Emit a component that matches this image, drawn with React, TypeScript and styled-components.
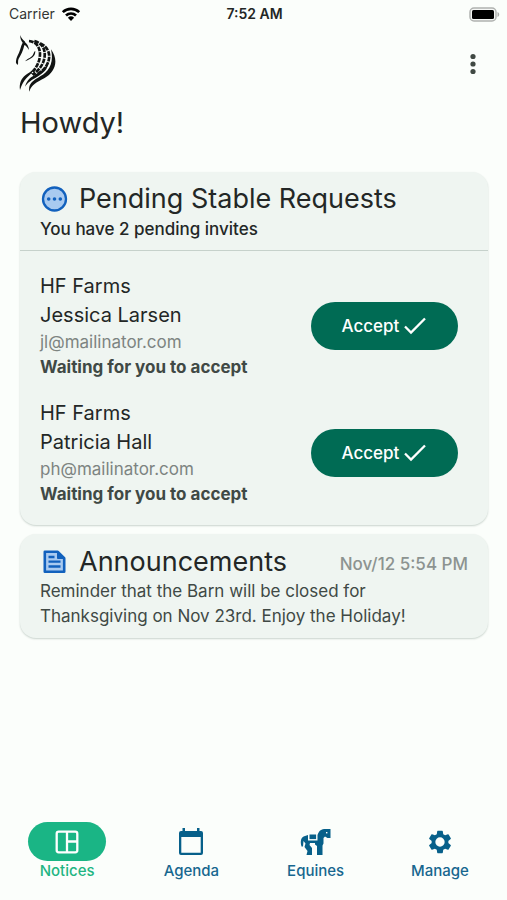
import React from "react";
import styled, { createGlobalStyle } from "styled-components";

const GlobalStyle = createGlobalStyle`
  * { box-sizing: border-box; }
  body {
    margin: 0;
    background: #fbfefb;
    color: #232726;
    font-family: Inter, "Liberation Sans", sans-serif;
  }
`;

const Screen = styled.div`
  min-height: 100vh;
  display: flex;
  flex-direction: column;
`;

const StatusBar = styled.div`
  display: grid;
  grid-template-columns: 1fr auto 1fr;
  align-items: center;
  height: 28px;
  padding: 0 7px 0 9px;
  font-size: 14px;
  line-height: 20px;
`;

const Carrier = styled.div`
  display: flex;
  align-items: center;
  gap: 6px;
  color: #333635;
`;

const Clock = styled.time`
  font-weight: 600;
`;

const Battery = styled.div`
  display: flex;
  justify-content: flex-end;
`;

const TopBar = styled.header`
  display: flex;
  justify-content: space-between;
  align-items: center;
  height: 72px;
  padding: 0 22px 0 15px;
`;

const MenuButton = styled.button`
  display: flex;
  padding: 0;
  border: 0;
  background: none;
  color: #404943;
  cursor: pointer;
`;

const Greeting = styled.h1`
  margin: 3px 0 29px;
  padding: 0 20px;
  font-size: 29px;
  line-height: 40px;
  font-weight: 400;
`;

const Main = styled.main`
  flex: 1;
`;

const Cards = styled.div`
  display: flex;
  flex-direction: column;
  gap: 9px;
  padding: 0 19px 0 20px;
`;

const Card = styled.section`
  border-radius: 16px;
  background: #eff5f1;
  box-shadow: 0 1px 2px rgba(0, 40, 25, 0.2);
`;

const CardHeader = styled.div`
  padding: 10px 20px 8px;
  border-bottom: 1px solid #c6d1cb;
`;

const CardTitle = styled.h2`
  display: flex;
  align-items: center;
  gap: 10px;
  margin: 0;
  font-size: 27px;
  line-height: 34px;
  font-weight: 400;
`;

const Summary = styled.p`
  margin: 0;
  font-size: 17px;
  line-height: 26px;
  font-weight: 500;
`;

const RequestList = styled.ul`
  display: flex;
  flex-direction: column;
  gap: 19px;
  margin: 0;
  padding: 21px 30px 18px 20px;
  list-style: none;
`;

const Request = styled.li`
  display: flex;
  align-items: center;
  justify-content: space-between;
`;

const Name = styled.div`
  font-size: 20px;
  line-height: 29px;
`;

const Detail = styled.div<{ $strong?: boolean }>`
  font-size: 17px;
  line-height: 25px;
  font-weight: ${(p) => (p.$strong ? 700 : 400)};
  color: ${(p) => (p.$strong ? "#404945" : "#7d8481")};
`;

const AcceptButton = styled.button`
  display: flex;
  align-items: center;
  justify-content: center;
  gap: 4px;
  flex: none;
  width: 147px;
  height: 48px;
  border: 0;
  border-radius: 24px;
  background: #006b54;
  color: #fff;
  font: inherit;
  font-size: 17px;
  font-weight: 500;
  cursor: pointer;
`;

const Announcement = styled.div`
  padding: 11px 20px 9px;
`;

const AnnouncementHead = styled.div`
  display: flex;
  align-items: center;
  justify-content: space-between;
`;

const Stamp = styled.time`
  padding-top: 4px;
  font-size: 17px;
  line-height: 24px;
  font-weight: 500;
  color: #8c9390;
`;

const Message = styled.p`
  max-width: 400px;
  margin: 0;
  font-size: 17px;
  line-height: 25px;
  color: #404945;
`;

const Nav = styled.nav`
  display: grid;
  grid-template-columns: repeat(4, 1fr);
  padding: 0 5px 19px;
`;

const NavLink = styled.a<{ $active?: boolean }>`
  display: flex;
  flex-direction: column;
  align-items: center;
  font-size: 15px;
  line-height: 20px;
  font-weight: 500;
  text-decoration: none;
  color: ${(p) => (p.$active ? "#1fb583" : "#17678f")};
`;

const NavPill = styled.span<{ $active?: boolean }>`
  display: flex;
  align-items: center;
  justify-content: center;
  width: 78px;
  height: 39px;
  border-radius: 20px;
  background: ${(p) => (p.$active ? "#1ab585" : "transparent")};
  color: ${(p) => (p.$active ? "#fff" : "#07608a")};
`;

const WifiIcon = () => (
  <svg width="20" height="16" viewBox="0 0 20 16" fill="none" stroke="#000" strokeWidth="2.7" aria-hidden="true">
    <path d="M1.8 6.1a11.8 11.8 0 0 1 16.4 0" />
    <path d="M5 9.5a7.2 7.2 0 0 1 10 0" />
    <path d="M10 15 6.9 11.8a4.5 4.5 0 0 1 6.2 0Z" fill="#000" stroke="none" />
  </svg>
);

const BatteryIcon = () => (
  <svg width="31" height="15" viewBox="0 0 31 15" aria-label="Battery full" role="img">
    <rect x="1" y="1" width="26" height="13" rx="4" fill="#f5f7f5" stroke="#b0b2b0" strokeWidth="1.5" />
    <rect x="3" y="3" width="22" height="9" rx="1.5" fill="#000" />
    <path d="M28.5 5c2.3.8 2.3 4.2 0 5Z" fill="#aaadaa" />
  </svg>
);

const HorseLogo = () => (
  <svg width="42" height="60" viewBox="30 12 126 180" role="img" aria-label="Horse logo">
    <g fill="#111413">
      <path d="M46 15c2 9 7 13 13 19 2 3 3 7 1 11l-2 1c-4 18-10 28-17 40-3 6-1 11-2 18-5-1-7-6-6-11 1-10 5-16 9-25 5-11 5-20 11-30-5-6-8-14-7-23Z" />
      <path d="M58 36c8 4 13 12 14 24-4-7-8-12-14-16Z" />
      <path d="M60 94c9-10 20-9 26-24 1-4 3-6 5-7 0 19-14 23-31 31Z" />
      <path d="M138 58c26 36 10 69-19 86-24 14-39 18-46 41-4-20 8-33 26-42 26-13 50-35 39-85Z" />
      <path d="M45 180c-3-19 4-35 16-44 8-6 17-10 23-18-2 13-12 18-20 27-8 8-13 18-19 35Z" />
      <path d="M60 170c7-23 17-27 33-37 17-11 28-18 35-33 1 18-12 29-31 40-17 11-27 14-37 30Z" />
    </g>
    <g fill="none" stroke="#111413" strokeWidth="8" strokeDasharray="14 3">
      <path d="M72 33c20 2 32 16 33 38 0 22-9 40-26 60" />
      <path d="M88 33c22 6 33 22 31 45-2 22-14 40-36 57" />
      <path d="M106 40c20 10 29 26 26 46-3 20-16 36-40 50" />
    </g>
  </svg>
);

const MoreIcon = () => (
  <svg width="24" height="24" viewBox="0 0 24 24" fill="currentColor" aria-hidden="true">
    <circle cx="12" cy="4.5" r="2.6" />
    <circle cx="12" cy="12" r="2.6" />
    <circle cx="12" cy="19.5" r="2.6" />
  </svg>
);

const PendingIcon = () => (
  <svg width="29" height="28" viewBox="0 0 29 28" aria-hidden="true">
    <circle cx="14.5" cy="14" r="11.5" fill="#a9caf0" stroke="#1261bd" strokeWidth="2.3" />
    <g fill="#1261bd">
      <circle cx="8.7" cy="14" r="1.8" />
      <circle cx="14.5" cy="14" r="1.8" />
      <circle cx="20.3" cy="14" r="1.8" />
    </g>
  </svg>
);

const ArticleIcon = () => (
  <svg width="29" height="28" viewBox="0 0 29 28" fill="none" stroke="#1261bd" aria-hidden="true">
    <path d="M4.8 3.8h13l6.400 6.400v13.600H4.800Z" fill="#a9caf0" strokeWidth="2.6" strokeLinejoin="round" />
    <path d="M17.500 4v6.500H24Z" fill="#1261bd" />
    <path d="M8.500 9h6M8.500 13.700h12M8.500 18.500h12" strokeWidth="2.3" />
  </svg>
);

const CheckIcon = () => (
  <svg width="24" height="20" viewBox="0 0 24 20" fill="none" stroke="currentColor" strokeWidth="2.3" aria-hidden="true">
    <path d="m2 10.5 6 6L22 2.5" />
  </svg>
);

const NoticesIcon = () => (
  <svg width="24" height="24" viewBox="0 0 24 24" fill="none" stroke="currentColor" strokeWidth="2.3" aria-hidden="true">
    <rect x="1.7" y="1.7" width="20.6" height="20.6" rx="2" />
    <path d="M12 2v20M12 11.5h10" />
  </svg>
);

const AgendaIcon = () => (
  <svg width="26" height="28" viewBox="0 0 26 28" fill="currentColor" aria-hidden="true">
    <path fillRule="evenodd" d="M4.500 0h2.500v3h12V0h2.500v3H23a2 2 0 0 1 2 2v20a2 2 0 0 1-2 2H3a2 2 0 0 1-2-2V5a2 2 0 0 1 2-2h1.500ZM3.300 9v15.700h19.400V9Z" />
  </svg>
);

const EquinesIcon = () => (
  <svg width="32" height="28" viewBox="0 0 32 28" fill="currentColor" aria-hidden="true">
    <path d="M1.500 18.500C0 13 1 9 5 8l3-1v5.500h9.500V7c1.500-4.500 4-6 8-6h5v9h-3l-2.500-1.500-1.500 1.500v5.500l-1 2V27H17v-9l-2-1.500v-1.500h-5l-.5 2 2.500 3v7H6.500l1-4-3-4 1-3.500L3.500 13l-.5 5.500Z" />
    <rect x="9.500" y="6.500" width="6.600" height="4.600" />
    <rect x="26" y="4" width="1.400" height="1.400" fill="#fbfefb" />
  </svg>
);

const ManageIcon = () => (
  <svg width="28" height="28" viewBox="0 0 24 24" fill="currentColor" aria-hidden="true">
    <path d="M19.14 12.94c.04-.3.06-.61.06-.94 0-.32-.02-.64-.07-.94l2.03-1.58a.49.49 0 0 0 .12-.61l-1.92-3.32a.488.488 0 0 0-.59-.22l-2.39.96c-.5-.38-1.03-.7-1.62-.94l-.36-2.54a.484.484 0 0 0-.48-.41h-3.84c-.24 0-.43.17-.47.41l-.36 2.54c-.59.24-1.13.57-1.62.94l-2.39-.96c-.22-.08-.47 0-.59.22L2.74 8.87c-.12.21-.08.47.12.61l2.03 1.58c-.05.3-.09.63-.09.94s.02.64.07.94l-2.03 1.58a.49.49 0 0 0-.12.61l1.92 3.32c.12.22.37.29.59.22l2.39-.96c.5.38 1.03.7 1.62.94l.36 2.54c.05.24.24.41.48.41h3.84c.24 0 .44-.17.47-.41l.36-2.54c.59-.24 1.13-.56 1.62-.94l2.39.96c.22.08.47 0 .59-.22l1.92-3.32c.12-.22.07-.47-.12-.61ZM12 16a4 4 0 1 1 0-8 4 4 0 0 1 0 8Z" />
  </svg>
);

const requests = [
  { farm: "HF Farms", person: "Jessica Larsen", email: "jl@mailinator.com" },
  { farm: "HF Farms", person: "Patricia Hall", email: "ph@mailinator.com" },
];

const tabs = [
  { label: "Notices", Icon: NoticesIcon, active: true },
  { label: "Agenda", Icon: AgendaIcon, active: false },
  { label: "Equines", Icon: EquinesIcon, active: false },
  { label: "Manage", Icon: ManageIcon, active: false },
];

export default function App() {
  return (
    <Screen>
      <GlobalStyle />
      <StatusBar>
        <Carrier>
          Carrier <WifiIcon />
        </Carrier>
        <Clock>7:52 AM</Clock>
        <Battery>
          <BatteryIcon />
        </Battery>
      </StatusBar>
      <TopBar>
        <HorseLogo />
        <MenuButton aria-label="More options">
          <MoreIcon />
        </MenuButton>
      </TopBar>
      <Main>
        <Greeting>Howdy!</Greeting>
        <Cards>
          <Card>
            <CardHeader>
              <CardTitle>
                <PendingIcon />
                Pending Stable Requests
              </CardTitle>
              <Summary>You have 2 pending invites</Summary>
            </CardHeader>
            <RequestList>
              {requests.map((r) => (
                <Request key={r.email}>
                  <div>
                    <Name>{r.farm}</Name>
                    <Name>{r.person}</Name>
                    <Detail>{r.email}</Detail>
                    <Detail $strong>Waiting for you to accept</Detail>
                  </div>
                  <AcceptButton>
                    Accept
                    <CheckIcon />
                  </AcceptButton>
                </Request>
              ))}
            </RequestList>
          </Card>
          <Card>
            <Announcement>
              <AnnouncementHead>
                <CardTitle>
                  <ArticleIcon />
                  Announcements
                </CardTitle>
                <Stamp>Nov/12 5:54 PM</Stamp>
              </AnnouncementHead>
              <Message>
                Reminder that the Barn will be closed for Thanksgiving on Nov 23rd. Enjoy the Holiday!
              </Message>
            </Announcement>
          </Card>
        </Cards>
      </Main>
      <Nav>
        {tabs.map(({ label, Icon, active }) => (
          <NavLink key={label} href={"#" + label.toLowerCase()} $active={active} aria-current={active ? "page" : undefined}>
            <NavPill $active={active}>
              <Icon />
            </NavPill>
            {label}
          </NavLink>
        ))}
      </Nav>
    </Screen>
  );
}
